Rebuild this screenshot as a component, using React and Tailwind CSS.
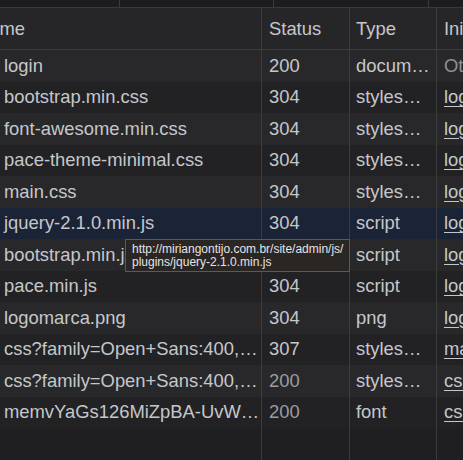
import React from "react";

const rows = [
  { name: "login", status: "200", type: "docum…", init: "Other", initGray: true },
  { name: "bootstrap.min.css", status: "304", type: "styles…", init: "login" },
  { name: "font-awesome.min.css", status: "304", type: "styles…", init: "login" },
  { name: "pace-theme-minimal.css", status: "304", type: "styles…", init: "login" },
  { name: "main.css", status: "304", type: "styles…", init: "login" },
  { name: "jquery-2.1.0.min.js", status: "304", type: "script", init: "login", selected: true },
  { name: "bootstrap.min.js", status: "304", type: "script", init: "login" },
  { name: "pace.min.js", status: "304", type: "script", init: "login" },
  { name: "logomarca.png", status: "304", type: "png", init: "login" },
  { name: "css?family=Open+Sans:400,…", status: "307", type: "styles…", init: "main.css" },
  { name: "css?family=Open+Sans:400,…", status: "200", type: "styles…", init: "css?family", statusGray: true },
  { name: "memvYaGs126MiZpBA-UvW…", status: "200", type: "font", init: "css?family", statusGray: true },
];

export default function App() {
  return (
    <div
      className="relative w-[463px] h-[460px] overflow-hidden bg-[#202123] text-[#c5c7ca] flex flex-col"
      style={{ fontFamily: '"Liberation Sans", Arial, sans-serif' }}
    >
      {/* top strip */}
      <div className="h-[8px] shrink-0 bg-[#1c1c1f] border-b border-[#3a3a3d] flex">
        <div className="w-[120px] border-r border-[#3a3a3d]" />
        <div className="w-[154px] border-r border-[#3a3a3d]" />
        <div className="w-[155px] border-r border-[#3a3a3d]" />
      </div>

      {/* header */}
      <div className="h-[42px] shrink-0 flex bg-[#262629] border-b border-[#3c3c3f] text-[18.4px] text-[#c5c7ca]">
        <div className="w-[262px] shrink-0 border-r border-[#3c3c3f] overflow-hidden flex items-center">
          <span className="ml-[-24px] whitespace-nowrap">Name</span>
        </div>
        <div className="w-[88px] shrink-0 border-r border-[#3c3c3f] pl-[7px] flex items-center">Status</div>
        <div className="w-[87px] shrink-0 border-r border-[#3c3c3f] pl-[6px] flex items-center">Type</div>
        <div className="flex-1 pl-[7px] flex items-center whitespace-nowrap overflow-hidden">Initiator</div>
      </div>

      {/* rows */}
      {rows.map((r, i) => (
        <div
          key={i}
          className={
            "h-[31.5px] shrink-0 flex text-[18.4px] " +
            (r.selected ? "bg-[#1b2437]" : i % 2 === 0 ? "bg-[#28282b]" : "bg-[#222225]")
          }
        >
          <div className="w-[262px] shrink-0 border-r border-[#3c3c3f] pl-[4px] flex items-center whitespace-nowrap overflow-hidden">
            {r.name}
          </div>
          <div
            className={
              "w-[88px] shrink-0 border-r border-[#3c3c3f] pl-[7px] flex items-center " +
              (r.statusGray ? "text-[#9a9ca0]" : "")
            }
          >
            {r.status}
          </div>
          <div className="w-[87px] shrink-0 border-r border-[#3c3c3f] pl-[6px] flex items-center whitespace-nowrap overflow-hidden">
            {r.type}
          </div>
          <div className="flex-1 pl-[7px] flex items-center whitespace-nowrap overflow-hidden">
            <span className={r.initGray ? "text-[#8e9094]" : "underline underline-offset-[3px]"}>{r.init}</span>
          </div>
        </div>
      ))}

      {/* empty filler */}
      <div className="flex-1 flex bg-[#1f1f22]">
        <div className="w-[262px] shrink-0 border-r border-[#3c3c3f]" />
        <div className="w-[88px] shrink-0 border-r border-[#3c3c3f]" />
        <div className="w-[87px] shrink-0 border-r border-[#3c3c3f]" />
      </div>

      {/* tooltip */}
      <div className="absolute left-[125px] top-[239px] w-[225px] h-[33px] bg-[#2a2624] border border-[#5c5a58] text-[#e4e4e4] text-[12px] leading-[12.7px] pl-[6px] pt-[3px] whitespace-nowrap">
        <div>http://miriangontijo.com.br/site/admin/js/</div>
        <div>plugins/jquery-2.1.0.min.js</div>
      </div>
    </div>
  );
}
